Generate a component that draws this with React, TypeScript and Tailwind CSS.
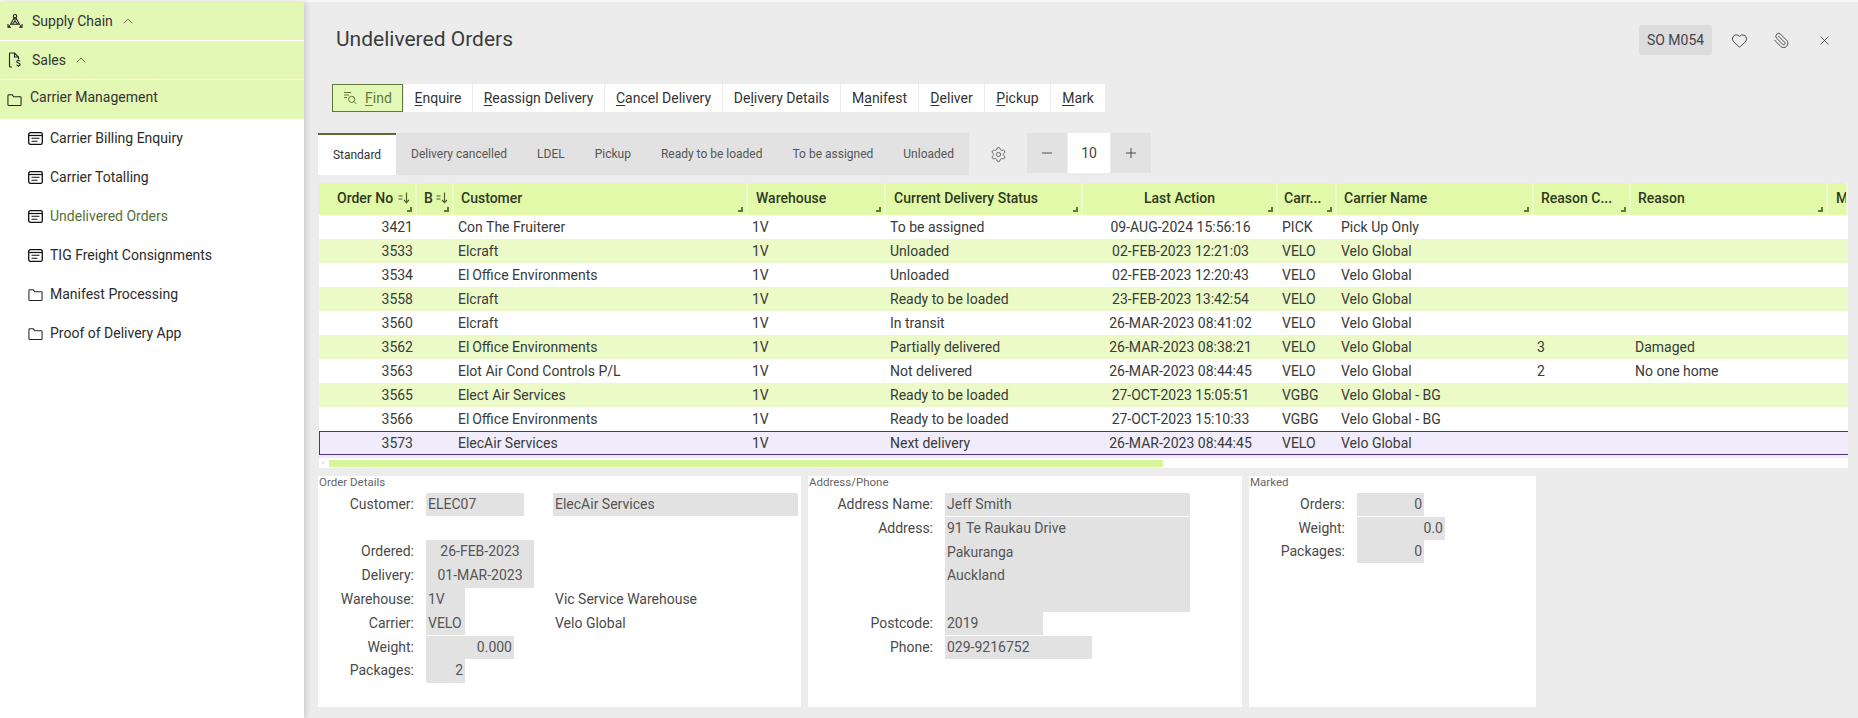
import type { ReactNode } from "react";
import { ChevronUp, Heart, Minus, Paperclip, Plus, Settings, X } from "lucide-react";

const COLS =
  "grid-cols-[98px_37px_294px_138px_197px_195px_59px_197px_97px_197px_20px]";

const ROWS = [
  ["3421", "Con The Fruiterer", "To be assigned", "09-AUG-2024 15:56:16", "PICK", "Pick Up Only", "", ""],
  ["3533", "Elcraft", "Unloaded", "02-FEB-2023 12:21:03", "VELO", "Velo Global", "", ""],
  ["3534", "El\u2009Office Environments", "Unloaded", "02-FEB-2023 12:20:43", "VELO", "Velo Global", "", ""],
  ["3558", "Elcraft", "Ready to be loaded", "23-FEB-2023 13:42:54", "VELO", "Velo Global", "", ""],
  ["3560", "Elcraft", "In transit", "26-MAR-2023 08:41:02", "VELO", "Velo Global", "", ""],
  ["3562", "El\u2009Office Environments", "Partially delivered", "26-MAR-2023 08:38:21", "VELO", "Velo Global", "3", "Damaged"],
  ["3563", "Elot Air Cond Controls P/L", "Not delivered", "26-MAR-2023 08:44:45", "VELO", "Velo Global", "2", "No one home"],
  ["3565", "Elect Air Services", "Ready to be loaded", "27-OCT-2023 15:05:51", "VGBG", "Velo Global - BG", "", ""],
  ["3566", "El\u2009Office Environments", "Ready to be loaded", "27-OCT-2023 15:10:33", "VGBG", "Velo Global - BG", "", ""],
  ["3573", "ElecAir Services", "Next delivery", "26-MAR-2023 08:44:45", "VELO", "Velo Global", "", ""],
];

const TABS = ["Delivery cancelled", "LDEL", "Pickup", "Ready to be loaded", "To be assigned", "Unloaded"];

function FolderIcon() {
  return (
    <svg width="15" height="14" viewBox="0 0 16 14" fill="none" stroke="#222" strokeWidth="1.1" className="shrink-0">
      <path d="M1 2.5C1 1.9 1.4 1.5 2 1.5h3.6l1.6 2H14.2c.5 0 .8.3.8.8v7.7c0 .5-.3.8-.8.8H1.8c-.5 0-.8-.3-.8-.8z" />
    </svg>
  );
}

function FormIcon() {
  return (
    <svg width="15" height="13" viewBox="0 0 15 13" fill="none" stroke="#111" className="shrink-0">
      <rect x="0.7" y="0.7" width="13.6" height="11.6" rx="1.6" strokeWidth="1.3" />
      <path d="M1 3.5h13" strokeWidth="1.2" />
      <path d="M3.5 6.3h8M3.5 9.2h6" strokeWidth="1.1" />
    </svg>
  );
}

function SupplyIcon() {
  return (
    <svg width="16" height="16" viewBox="0 0 16 16" fill="none" stroke="#222" strokeWidth="1.1" className="shrink-0">
      <circle cx="8" cy="3.2" r="1.7" />
      <path d="M7 5 3.6 11.3h8.8L9 5" />
      <path d="M8 5v3.2M8 8.2 5.5 11M8 8.2l2.5 2.8" />
      <path d="M1 11v3.3h3M1 14.3 3 12.5M15 11v3.3h-3M15 14.3l-2-1.8" />
    </svg>
  );
}

function SalesIcon() {
  return (
    <svg width="16" height="16" viewBox="0 0 16 16" fill="none" stroke="#222" strokeWidth="1.1" className="shrink-0">
      <path d="M5 15H3.2c-.5 0-.7-.3-.7-.7V1.7c0-.4.2-.7.7-.7h4.3l4 4v2" />
      <path d="M7.5 1v4h4" />
      <path d="M13 9.3c-.4-.6-1-.8-1.7-.8-.9 0-1.6.4-1.6 1.2 0 1.7 3.4.9 3.4 2.7 0 .8-.8 1.3-1.8 1.3-.8 0-1.4-.3-1.8-.9M11.3 7.5v1M11.3 13.7v1.3" />
    </svg>
  );
}

function FindIcon() {
  return (
    <svg width="14" height="14" viewBox="0 0 14 14" fill="none" stroke="#5f7a35" strokeWidth="1" className="shrink-0">
      <path d="M1 1.5h7M1 4h5M1 6.5h3" />
      <circle cx="8.7" cy="8.3" r="3.1" />
      <path d="m11 10.6 2.2 2.2" />
    </svg>
  );
}

function SortIcon() {
  return (
    <svg width="13" height="12" viewBox="0 0 13 12" fill="none" stroke="#4f6130" strokeWidth="1.2" className="shrink-0">
      <path d="M0.5 4h4M0.5 7h4" />
      <path d="M8.5 0.5v10M6 8l2.5 2.7L11 8" />
    </svg>
  );
}

function HeaderCell({ children, className = "", grip = true }: { children: ReactNode; className?: string; grip?: boolean }) {
  return (
    <div className={`relative flex h-full items-center overflow-hidden whitespace-nowrap border-r-2 border-[#ecfbcb] pb-[2px] ${className}`}>
      {children}
      {grip && (
        <svg width="5" height="5" viewBox="0 0 5 5" className="absolute bottom-[3px] right-[3px]">
          <path d="M5 0v5H0v-2h3V0z" fill="#5f7a35" />
        </svg>
      )}
    </div>
  );
}

function Caption({ children }: { children: ReactNode }) {
  return <div className="h-[17px] pl-px text-[11.5px] leading-[13px] text-[#666]">{children}</div>;
}

function Line({
  label,
  labelW,
  height = "h-[24px]",
  children,
}: {
  label?: string;
  labelW: string;
  height?: string;
  children?: ReactNode;
}) {
  return (
    <div className={`flex items-start text-[14px] leading-[23px] text-[#4a4a4a] ${height}`}>
      <div className={`shrink-0 pr-3 text-right ${labelW}`}>{label}</div>
      {children}
    </div>
  );
}

function Box({ children, className = "" }: { children?: ReactNode; className?: string }) {
  return <div className={`shrink-0 bg-[#e2e2e2] px-[2px] text-[#555] ${className}`}>{children}</div>;
}

function Mnemonic({ before = "", mark, after }: { before?: string; mark: string; after: string }) {
  return (
    <>
      {before}
      <span className="underline underline-offset-2">{mark}</span>
      {after}
    </>
  );
}

export default function App() {
  return (
    <div className="flex h-[718px] w-[1858px] flex-col overflow-hidden bg-[#ececec] font-['Roboto',sans-serif] text-[14px] text-[#333]">
      <div className="h-[2px] shrink-0 bg-[#f7f7f7]" />
      <div className="flex min-h-0 flex-1">
        <aside className="relative z-10 w-[304px] shrink-0 bg-white shadow-[2px_0_5px_rgba(0,0,0,0.14)]">
          <div className="flex h-[39px] items-center gap-[9px] border-b border-white bg-[#e3f8b5] pl-[7px]">
            <SupplyIcon />
            <span>Supply Chain</span>
            <ChevronUp size={16} strokeWidth={1} className="-ml-[2px]" />
          </div>
          <div className="flex h-[39px] items-center gap-[9px] border-b border-white bg-[#e3f8b5] pl-[7px]">
            <SalesIcon />
            <span>Sales</span>
            <ChevronUp size={16} strokeWidth={1} className="-ml-[2px]" />
          </div>
          <div className="flex h-[39px] items-center gap-[8px] bg-[#e3f8b5] pl-[7px]">
            <FolderIcon />
            <span className="-translate-y-[2px]">Carrier Management</span>
          </div>
          {[
            ["Carrier Billing Enquiry", "form"],
            ["Carrier Totalling", "form"],
            ["Undelivered Orders", "active"],
            ["TIG Freight Consignments", "form"],
            ["Manifest Processing", "folder"],
            ["Proof of Delivery App", "folder"],
          ].map(([name, kind]) => (
            <div key={name} className="flex h-[39px] items-center gap-[7px] pl-[28px]">
              {kind === "folder" ? <FolderIcon /> : <FormIcon />}
              <span className={kind === "active" ? "text-[#56703a]" : "text-[#2b2b2b]"}>{name}</span>
            </div>
          ))}
        </aside>

        <main className="min-w-0 flex-1">
          <div className="flex h-[82px] items-start justify-between pl-[32px] pt-[23px]">
            <h1 className="text-[21px] font-normal leading-[28px] text-[#3c3c3c]">Undelivered Orders</h1>
            <div className="flex h-[30px] items-center pr-[26px] text-[#333]">
              <span className="flex h-[30px] w-[73px] items-center justify-center rounded-[3px] bg-[#dcdcdc] text-[14px] text-[#444]">SO M054</span>
              <Heart size={17} strokeWidth={1.2} className="ml-[19px]" />
              <Paperclip size={17} strokeWidth={1.2} className="ml-[25px] -scale-x-100" />
              <X size={15} strokeWidth={1.2} className="ml-[27px]" />
            </div>
          </div>

          <div className="ml-[28px] flex h-[28px] gap-px">
            <button className="flex w-[71px] items-center justify-center gap-[8px] border border-[#5f7a35] bg-[#e4f8b8] text-[#5f7a35]">
              <FindIcon />
              <span><Mnemonic mark="F" after="ind" /></span>
            </button>
            <button className="w-[68px] bg-white"><Mnemonic mark="E" after="nquire" /></button>
            <button className="w-[131px] bg-white"><Mnemonic mark="R" after="eassign Delivery" /></button>
            <button className="w-[117px] bg-white"><Mnemonic mark="C" after="ancel Delivery" /></button>
            <button className="w-[117px] bg-white"><Mnemonic before="De" mark="l" after="ivery Details" /></button>
            <button className="w-[77px] bg-white"><Mnemonic before="M" mark="a" after="nifest" /></button>
            <button className="w-[65px] bg-white"><Mnemonic mark="D" after="eliver" /></button>
            <button className="w-[65px] bg-white"><Mnemonic mark="P" after="ickup" /></button>
            <button className="w-[54px] bg-white"><Mnemonic mark="M" after="ark" /></button>
          </div>

          <div className="ml-[14px] mt-[21px] flex h-[42px]">
            <div className="flex w-[651px] whitespace-nowrap bg-[#e2e2e2] text-[12px] text-[#555]">
              <div className="flex w-[78px] shrink-0 items-center justify-center border-t-2 border-[#5c6b33] bg-white text-[#333]">Standard</div>
              {TABS.map((tab) => (
                <div key={tab} className="flex items-center px-[15px]">{tab}</div>
              ))}
            </div>
            <div className="flex w-[58px] items-center justify-center">
              <Settings size={17} strokeWidth={1.1} className="text-[#444]" />
            </div>
            <div className="flex h-[40px] gap-px text-[#444]">
              <div className="flex w-[40px] items-center justify-center bg-[#e2e2e2]"><Minus size={16} strokeWidth={1.4} /></div>
              <div className="flex w-[42px] items-center justify-center bg-white">10</div>
              <div className="flex w-[40px] items-center justify-center bg-[#e2e2e2]"><Plus size={16} strokeWidth={1.4} /></div>
            </div>
          </div>

          <div className="ml-[15px] mt-[8px] w-[1529px]">
            <div className={`grid h-[32px] ${COLS} bg-[#e1f9a9] font-medium text-[#2f3a1c]`}>
              <HeaderCell className="gap-[5px] pl-[18px]">Order No<SortIcon /></HeaderCell>
              <HeaderCell className="gap-[3px] pl-[7px]">B<SortIcon /></HeaderCell>
              <HeaderCell className="pl-[7px]">Customer</HeaderCell>
              <HeaderCell className="pl-[8px]">Warehouse</HeaderCell>
              <HeaderCell className="pl-[8px]">Current Delivery Status</HeaderCell>
              <HeaderCell className="justify-center">Last Action</HeaderCell>
              <HeaderCell className="pl-[6px]">Carr...</HeaderCell>
              <HeaderCell className="pl-[7px]">Carrier Name</HeaderCell>
              <HeaderCell className="pl-[7px]">Reason C...</HeaderCell>
              <HeaderCell className="pl-[7px]">Reason</HeaderCell>
              <HeaderCell className="border-r-0 pl-[8px]" grip={false}>M</HeaderCell>
            </div>
            {ROWS.map((row, index) => {
              const selected = index === ROWS.length - 1;
              const tone = selected
                ? "bg-[#f0ecfb] shadow-[inset_1px_0_0_#4e2f8f,inset_0_1px_0_#4e2f8f,inset_0_-1px_0_#4e2f8f]"
                : index % 2 === 1
                  ? "bg-[#ebfac6]"
                  : "bg-white";
              return (
                <div key={row[0]} className={`grid h-[24px] ${COLS} items-center whitespace-nowrap leading-[24px] text-[#3a3a3a] ${tone}`}>
                  <div className="pr-[4px] text-right">{row[0]}</div>
                  <div />
                  <div className="pl-[4px]">{row[1]}</div>
                  <div className="pl-[4px]">1V</div>
                  <div className="pl-[4px]">{row[2]}</div>
                  <div className="text-center">{row[3]}</div>
                  <div className="pl-[4px]">{row[4]}</div>
                  <div className="pl-[4px]">{row[5]}</div>
                  <div className="pl-[3px]">{row[6]}</div>
                  <div className="pl-[4px]">{row[7]}</div>
                  <div />
                </div>
              );
            })}
            <div className="h-[13px] bg-white">
              <div className="h-[3px] bg-[#f0ecfb]" />
              <div className="flex h-[8px] items-center pt-[2px]">
                <svg width="10" height="8" viewBox="0 0 10 8" className="shrink-0">
                  <path d="M5 2 2.5 4 5 6z" fill="#dfe8cc" />
                </svg>
                <div className="h-[7px] w-[834px] bg-[#d8f59a]" />
              </div>
            </div>
          </div>

          <div className="ml-[14px] mt-[8px] flex h-[231px] gap-[7px]">
            <section className="w-[483px] bg-white">
              <Caption>Order Details</Caption>
              <Line label="Customer:" labelW="w-[108px]">
                <Box className="h-[23px] w-[98px]">ELEC07</Box>
                <Box className="ml-[29px] h-[23px] w-[245px]">ElecAir Services</Box>
              </Line>
              <Line labelW="w-[108px]" height="h-[23px]" />
              <Line label="Ordered:" labelW="w-[108px]"><Box className="h-[24px] w-[108px] text-center">26-FEB-2023</Box></Line>
              <Line label="Delivery:" labelW="w-[108px]"><Box className="h-[24px] w-[108px] text-center">01-MAR-2023</Box></Line>
              <Line label="Warehouse:" labelW="w-[108px]">
                <Box className="h-[24px] w-[39px]">1V</Box>
                <div className="ml-[88px] pl-[2px]">Vic Service Warehouse</div>
              </Line>
              <Line label="Carrier:" labelW="w-[108px]">
                <Box className="h-[23px] w-[39px]">VELO</Box>
                <div className="ml-[88px] pl-[2px]">Velo Global</div>
              </Line>
              <Line label="Weight:" labelW="w-[108px]" height="h-[23px]"><Box className="h-[23px] w-[88px] text-right">0.000</Box></Line>
              <Line label="Packages:" labelW="w-[108px]"><Box className="h-[24px] w-[39px] text-right">2</Box></Line>
            </section>

            <section className="w-[434px] bg-white">
              <Caption>Address/Phone</Caption>
              <Line label="Address Name:" labelW="w-[137px]"><Box className="h-[23px] w-[245px]">Jeff Smith</Box></Line>
              <div className="flex h-[95px] text-[14px] leading-[23px] text-[#4a4a4a]">
                <div className="w-[137px] shrink-0 pr-3 text-right">Address:</div>
                <Box className="w-[245px] leading-[23.5px]">
                  <div>91 Te Raukau Drive</div>
                  <div>Pakuranga</div>
                  <div>Auckland</div>
                </Box>
              </div>
              <Line label="Postcode:" labelW="w-[137px]"><Box className="h-[23px] w-[98px]">2019</Box></Line>
              <Line label="Phone:" labelW="w-[137px]"><Box className="h-[23px] w-[147px]">029-9216752</Box></Line>
            </section>

            <section className="w-[287px] bg-white">
              <Caption>Marked</Caption>
              <Line label="Orders:" labelW="w-[108px]"><Box className="h-[23px] w-[67px] text-right">0</Box></Line>
              <Line label="Weight:" labelW="w-[108px]" height="h-[23px]"><Box className="h-[23px] w-[88px] text-right">0.0</Box></Line>
              <Line label="Packages:" labelW="w-[108px]"><Box className="h-[23px] w-[67px] text-right">0</Box></Line>
            </section>
          </div>
        </main>
      </div>
    </div>
  );
}
